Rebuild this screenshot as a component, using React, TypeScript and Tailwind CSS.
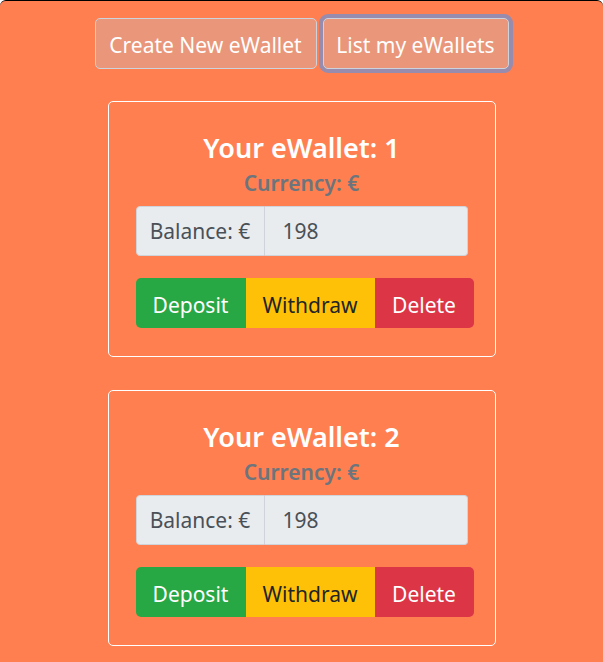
import React from "react";

const wallets = [
  { id: 1, currency: "€", balance: 198 },
  { id: 2, currency: "€", balance: 198 },
];

function WalletCard({ id, currency, balance }: { id: number; currency: string; balance: number }) {
  return (
    <div className="w-[388px] rounded-[5px] border border-white px-[27px] pb-[28px] pt-[28px] text-center">
      <h3 className="text-[27px] font-semibold leading-[36px] text-white">Your eWallet: {id}</h3>
      <h5 className="mt-[4px] text-[21px] font-semibold leading-[26px] text-[#6c757d]">
        Currency: {currency}
      </h5>

      {/* Balance input group */}
      <div className="mt-[10px] flex h-[50px] w-[332px] text-[21px] text-[#495057]">
        <span className="flex w-[129px] items-center justify-center rounded-l-[4px] border border-[#ced4da] bg-[#e9ecef] pt-[2px]">
          Balance: {currency}
        </span>
        <div className="flex flex-1 items-center rounded-r-[4px] border border-l-0 border-[#ced4da] bg-[#e9ecef] pl-[18px] pt-[2px]">
          {balance}
        </div>
      </div>

      {/* Actions */}
      <div className="mt-[22px] flex h-[50px] w-[338px] text-[21px]">
        <button className="w-[110px] rounded-l-[5px] bg-[#28a745] pt-[5px] text-white">Deposit</button>
        <button className="w-[129px] bg-[#ffc107] pt-[5px] text-[#212529]">Withdraw</button>
        <button className="w-[99px] rounded-r-[5px] bg-[#dc3545] pt-[5px] text-white">Delete</button>
      </div>
    </div>
  );
}

export default function App() {
  return (
    <div className="min-h-[662px] rounded-t-[6px] border-t border-black bg-[#ff7f50] pt-[17px] font-['Noto_Sans',sans-serif]">
      <div className="flex justify-center gap-[6px]">
        <button className="h-[51px] w-[222px] rounded-[5px] border border-[#cdd3dc] bg-[#e9967a] pt-[4px] text-[21px] text-white">
          Create New eWallet
        </button>
        <button className="h-[51px] w-[186px] rounded-[5px] border border-[#cdd3dc] bg-[#e9967a] pt-[4px] text-[21px] text-white ring-[4px] ring-[#978cae]">
          List my eWallets
        </button>
      </div>

      <div className="mt-[32px] flex flex-col items-center gap-[33px] pb-[16px]">
        {wallets.map((w) => (
          <WalletCard key={w.id} {...w} />
        ))}
      </div>
    </div>
  );
}
